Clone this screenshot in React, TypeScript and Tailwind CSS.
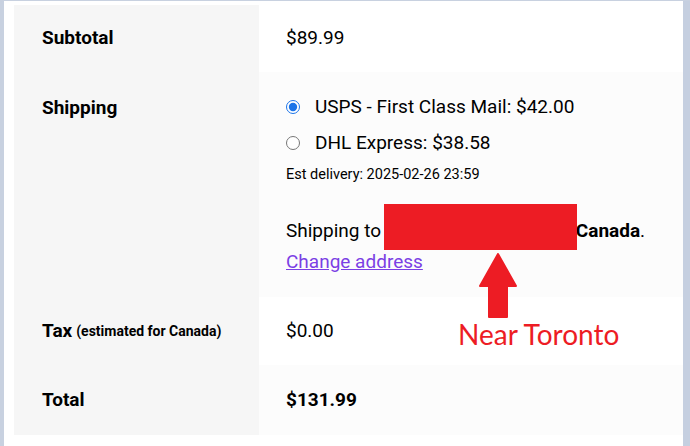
const rowLabel = "flex items-center pl-7 text-[19px] font-bold text-black";

export default function App() {
  return (
    <div className="h-[446px] w-[690px] bg-white border-l-4 border-t border-[#c8d1e0] font-['Roboto',sans-serif] text-black relative overflow-hidden">
      <div className="absolute right-0 top-0 h-full w-[7px] bg-[#c5cfe0]" />
      <div className="ml-[10px] mt-1 w-[669px] grid grid-cols-[245px_424px] relative">
        {/* subtotal */}
        <div className={`${rowLabel} h-[67px] bg-[#f6f6f6]`}>Subtotal</div>
        <div className="flex items-center pl-[27px] h-[67px] bg-white text-[19px]">$89.99</div>

        {/* shipping */}
        <div className="bg-[#f6f6f6] pl-7 pt-[22px] text-[19px] font-bold">Shipping</div>
        <div className="bg-[#fcfcfc] h-[225px] pl-[27px] pt-[22px]">
          <label className="flex items-center gap-[15px] text-[19px] h-[26px]">
            <input type="radio" name="ship" defaultChecked className="w-[14px] h-[14px] m-0 accent-[#1a73e8]" />
            USPS - First Class Mail: $42.00
          </label>
          <label className="flex items-center gap-[15px] text-[19px] h-[26px] mt-[10px]">
            <input type="radio" name="ship" className="w-[14px] h-[14px] m-0" />
            DHL Express: $38.58
          </label>
          <p className="text-[14.5px] leading-[20px] mt-[9px]">Est delivery: 2025-02-26 23:59</p>
          <p className="text-[19px] mt-[33px] leading-[26px]">
            Shipping to{" "}
            <span className="relative inline-block w-[190px] h-[16px] align-middle">
              <span className="absolute left-[-2px] top-[-20px] w-[193px] h-[46px] bg-[#ed1c24]" />
            </span>
            <b>Canada</b>.
          </p>
          <a href="#" className="block w-fit mt-[7px] text-[19px] text-[#7b3fe4] underline leading-[22px]">Change address</a>
        </div>

        {/* tax */}
        <div className={`${rowLabel} h-[68px] bg-[#f6f6f6]`}>
          <span>Tax</span>
          <span className="ml-1 text-[14px]">(estimated for Canada)</span>
        </div>
        <div className="flex items-center pl-[27px] h-[68px] bg-white text-[19px]">$0.00</div>

        {/* total */}
        <div className={`${rowLabel} h-[70px] bg-[#f6f6f6]`}>Total</div>
        <div className="flex items-center pl-[27px] h-[70px] bg-[#fcfcfc] text-[19px] font-bold">$131.99</div>

        {/* annotation */}
        <div className="absolute left-[464px] top-[248px]">
          <svg width="40" height="66" viewBox="0 0 40 66">
            <polygon points="20,1 38,33 29,33 29,64 11,64 11,33 2,33" fill="#ed1c24" stroke="#ed1c24" strokeLinejoin="round" strokeWidth="2" />
          </svg>
        </div>
        <div className="absolute left-[444px] top-[315px] text-[28px] text-[#ed1c24] font-['Lato',sans-serif] leading-none">
          Near Toronto
        </div>
      </div>
    </div>
  );
}
